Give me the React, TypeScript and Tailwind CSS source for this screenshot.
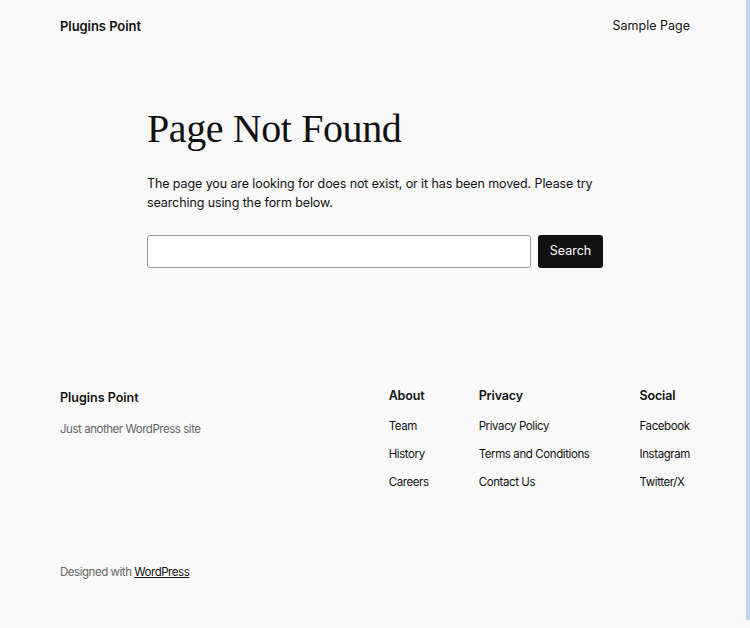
export default function App() {
  const cols = [
    { title: 'About', links: ['Team', 'History', 'Careers'] },
    { title: 'Privacy', links: ['Privacy Policy', 'Terms and Conditions', 'Contact Us'] },
    { title: 'Social', links: ['Facebook', 'Instagram', 'Twitter/X'] },
  ]

  return (
    <div className="relative min-h-[628px] bg-[#f9f9f9] font-['Inter',sans-serif] text-[#111111]">
      <div className="absolute right-0 top-0 h-[620px] w-[4px] bg-[#c6d8ec]" />
      <header className="flex items-center justify-between px-[60px] pt-[17px]">
        <a className="text-[13px] font-semibold tracking-[-0.005em]">Plugins Point</a>
        <a className="text-[12.5px]">Sample Page</a>
      </header>

      <main className="mx-auto w-[456px] pt-[68px]">
        <h1 className="font-['Liberation_Serif',serif] text-[40px] leading-[1.2] tracking-[-0.01em]">Page Not Found</h1>
        <p className="mt-[21px] text-[12.5px] leading-[19px] tracking-[-0.008em]">
          The page you are looking for does not exist, or it has been moved. Please try searching using the form below.
        </p>
        <form className="mt-[23px] flex gap-[7px]">
          <input className="h-[33px] flex-1 rounded-[3px] border border-[#9a9a9a] bg-white px-3" />
          <button type="button" className="h-[33px] w-[65px] rounded-[3px] bg-[#111111] text-[12.5px] text-white">
            Search
          </button>
        </form>
      </main>

      <footer className="px-[60px] pt-[119px]">
        <div className="flex justify-between">
          <div>
            <p className="pt-[2px] text-[12.5px] font-semibold">Plugins Point</p>
            <p className="mt-[14px] text-[11.5px] tracking-[-0.04em] text-[#666666]">Just another WordPress site</p>
          </div>
          <div className="flex gap-[50px]">
            {cols.map((c) => (
              <div key={c.title} className="flex flex-col">
                <h2 className="text-[12.5px] font-semibold tracking-[-0.01em]">{c.title}</h2>
                <ul className="mt-[12px] flex flex-col gap-[10px] text-[11.5px] tracking-[-0.035em]">
                  {c.links.map((l) => (
                    <li key={l} className="leading-[18px]">{l}</li>
                  ))}
                </ul>
              </div>
            ))}
          </div>
        </div>
        <p className="mt-[73px] text-[11.5px] tracking-[-0.04em] text-[#666666]">
          Designed with <a className="text-[#111111] underline">WordPress</a>
        </p>
      </footer>
    </div>
  )
}
